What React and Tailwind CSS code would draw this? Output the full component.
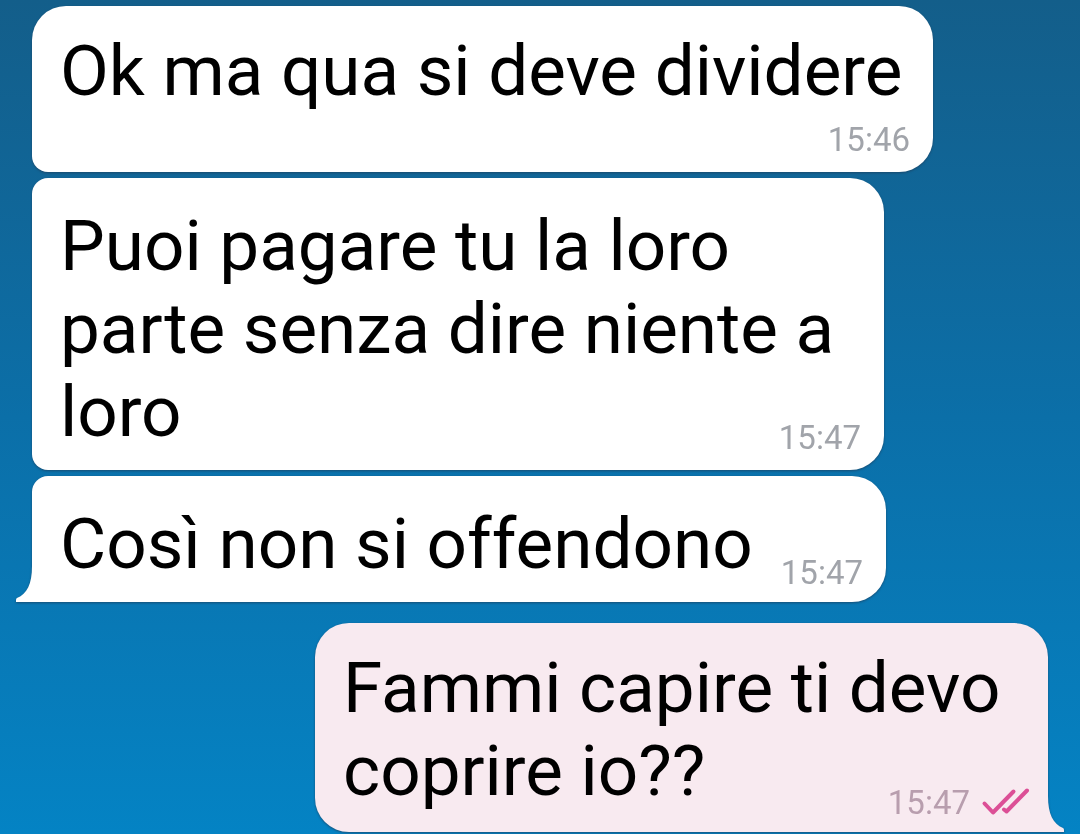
const messages = [
  {
    text: "Ok ma qua si deve dividere",
    time: "15:46",
    row: "",
    bubble: "w-[901px] rounded-[34px] rounded-bl-[16px] pt-[23px] pb-3 bg-white",
    meta: "mt-2 text-[#a1a4aa]",
  },
  {
    text: "Puoi pagare tu la loro parte senza dire niente a loro",
    time: "15:47",
    row: "mt-1.5",
    bubble: "w-[852px] rounded-[34px] rounded-l-[16px] pt-[26px] pb-3 bg-white",
    meta: "mt-12 text-[#a1a4aa]",
  },
  {
    text: "Così non si offendono",
    time: "15:47",
    row: "mt-1.5",
    bubble: "w-[854px] rounded-[34px] rounded-tl-[16px] rounded-bl-none pt-[26px] pb-[9px] bg-white",
    meta: "mt-[51px] text-[#a1a4aa]",
    tail: "left",
  },
  {
    text: "Fammi capire ti devo coprire io??",
    time: "15:47",
    row: "mt-[21px] justify-end",
    bubble: "w-[733px] rounded-[34px] rounded-br-none pt-[23px] pb-[9px] bg-[#f8eaf0]",
    meta: "mt-[54px] text-[#b89eae]",
    tail: "right",
    read: true,
  },
];

function Tail({ side }) {
  return side === "left" ? (
    <svg aria-hidden="true" viewBox="0 0 17 36" className="absolute bottom-0 -left-4 h-9 w-[17px] text-white">
      <path d="M17 0H16C16 18 11 28 1 32Q0 32.500 0 34V36H17Z" fill="currentColor" />
    </svg>
  ) : (
    <svg aria-hidden="true" viewBox="0 0 17 36" className="absolute -right-4 bottom-0 h-9 w-[17px] text-[#f8eaf0]">
      <path d="M0 0H1C1 18 6 28 16 32Q17 32.500 17 34V36H0Z" fill="currentColor" />
    </svg>
  );
}

function ReadTicks() {
  return (
    <svg role="img" aria-label="Letto" viewBox="0 0 48 28" className="mr-[-5px] ml-3 h-7 w-12 overflow-visible" fill="none" stroke="#dc4f96" strokeWidth="4" strokeLinecap="round" strokeLinejoin="round">
      <path d="M2.500 14.500L11 23.500L31.500 2.500" />
      <path d="M22 20.500L24.500 22.500L45 1.500" />
    </svg>
  );
}

function Message({ text, time, row, bubble, meta, tail, read }) {
  return (
    <li className={`flex ${row}`}>
      <article
        className={`relative flow-root max-w-full pr-[23px] pl-7 text-[71px] leading-[83px] text-black drop-shadow-[0_1px_1px_rgba(30,60,90,0.7)] ${bubble}`}
      >
        <span>{text}</span>
        <span className={`float-right flex items-center text-[33px] leading-10 ${meta}`}>
          <time dateTime={time}>{time}</time>
          {read && <ReadTicks />}
        </span>
        {tail && <Tail side={tail} />}
      </article>
    </li>
  );
}

export default function App() {
  return (
    <main className="min-h-screen overflow-hidden bg-linear-to-b from-[#135e8a] via-[#0b6fa8] to-[#0483c4] pt-1.5 pb-0.5 font-['Roboto',sans-serif]">
      <ol className="flex flex-col px-8">
        {messages.map((message, index) => (
          <Message key={index} {...message} />
        ))}
      </ol>
    </main>
  );
}
